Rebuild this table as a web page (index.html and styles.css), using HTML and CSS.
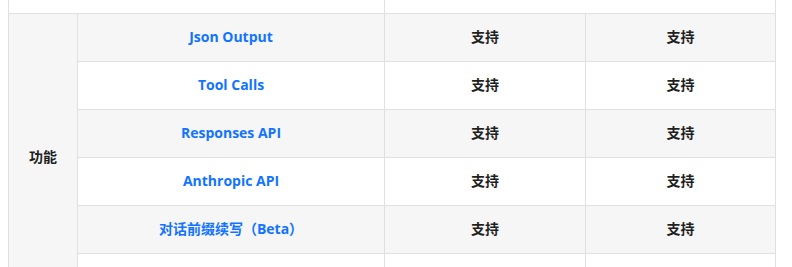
FILE: index.html
```html
<!DOCTYPE html>
<html lang="zh-CN">
<head>
<meta charset="utf-8">
<link rel="stylesheet" href="styles.css">
</head>
<body>
<table class="spec">
  <colgroup>
    <col class="c1"><col class="c2"><col class="c3"><col class="c4">
  </colgroup>
  <tr class="top">
    <td colspan="2"></td>
    <td colspan="2"></td>
  </tr>
  <tr class="alt">
    <td class="group" rowspan="6">功能</td>
    <td class="feat"><a>Json Output</a></td>
    <td>支持</td>
    <td>支持</td>
  </tr>
  <tr>
    <td class="feat"><a>Tool Calls</a></td>
    <td>支持</td>
    <td>支持</td>
  </tr>
  <tr class="alt">
    <td class="feat"><a>Responses API</a></td>
    <td>支持</td>
    <td>支持</td>
  </tr>
  <tr>
    <td class="feat"><a>Anthropic API</a></td>
    <td>支持</td>
    <td>支持</td>
  </tr>
  <tr class="alt">
    <td class="feat"><a>对话前缀续写（Beta）</a></td>
    <td>支持</td>
    <td>支持</td>
  </tr>
  <tr>
    <td class="feat"></td>
    <td></td>
    <td></td>
  </tr>
</table>
</body>
</html>
```
FILE: styles.css
```css
html, body {
  margin: 0;
  background: #ffffff;
}
body {
  padding-left: 8px;
  font-family: "Open Sans", "Noto Sans CJK SC", sans-serif;
  font-size: 14px;
  font-weight: 700;
  color: #1f1f1f;
  overflow: hidden;
}
.spec {
  border-collapse: collapse;
  table-layout: fixed;
  width: 768px;
}
.c1 { width: 69px; }
.c2 { width: 307px; }
.c3 { width: 201px; }
.c4 { width: 190px; }
.spec td {
  border: 1px solid #dfe0e2;
  text-align: center;
  vertical-align: middle;
  height: 48px;
  padding: 0 8px 2px;
  box-sizing: border-box;
}
.spec tr.top td {
  height: 13px;
  border-top: none;
  padding: 0;
}
.spec tr.alt td { background: #f6f6f6; }
.spec td.group { background: #f6f6f6; }
.feat a {
  color: #1273ff;
  text-decoration: none;
}
```
